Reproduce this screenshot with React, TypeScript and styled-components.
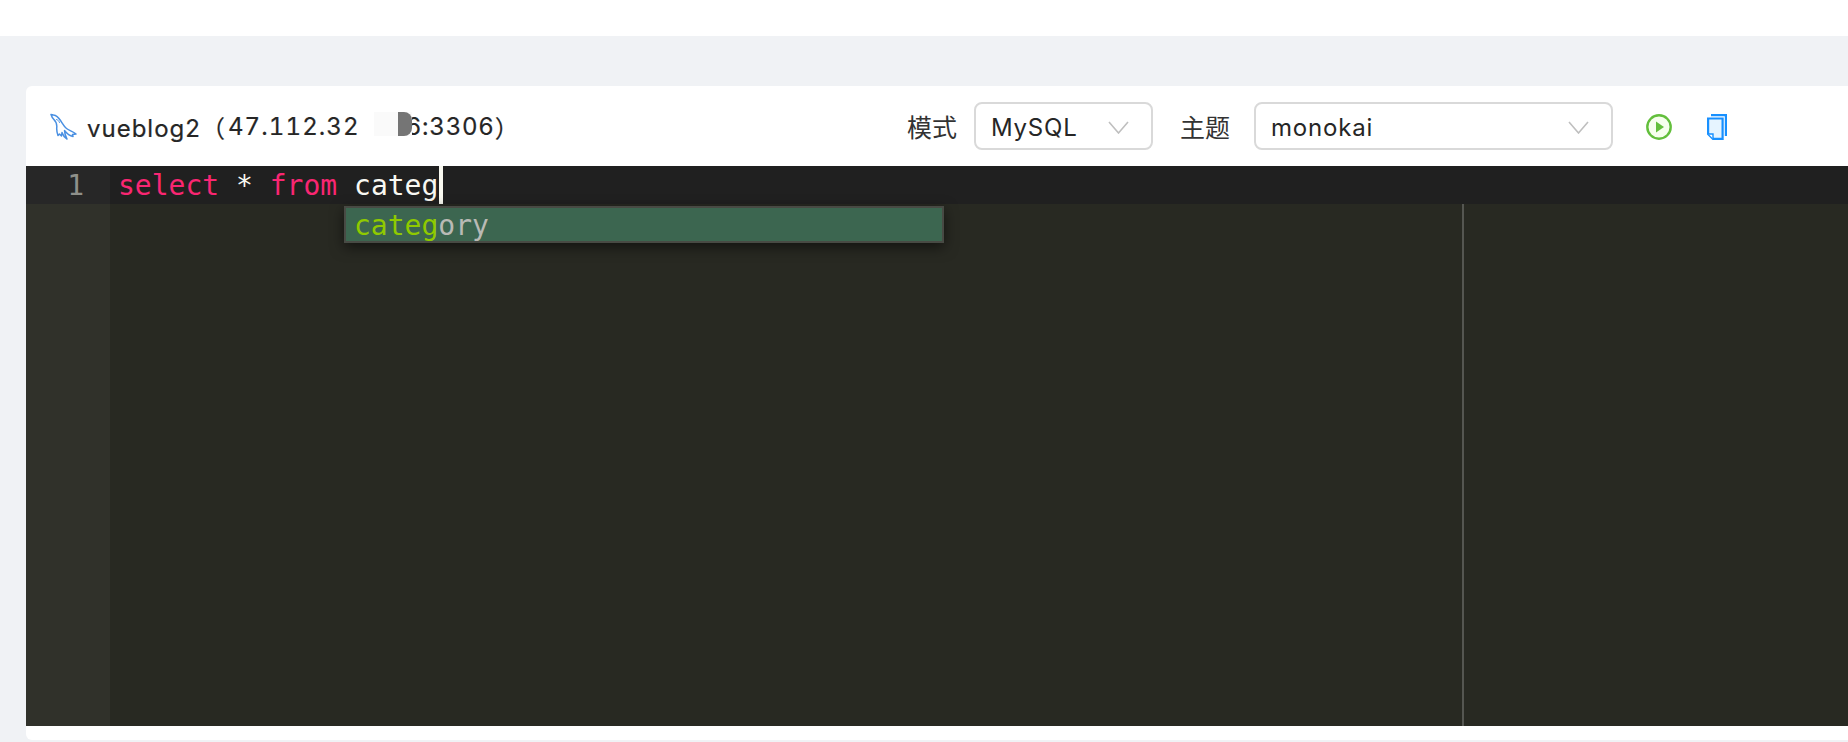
import React from "react";
import styled, { createGlobalStyle } from "styled-components";

const GlobalStyle = createGlobalStyle`
  html, body {
    margin: 0;
    padding: 0;
    background: #f0f2f5;
    overflow: hidden;
  }
`;

const Page = styled.div`
  width: 1848px;
  height: 742px;
  display: flex;
  flex-direction: column;
  font-family: Inter, "Noto Sans CJK SC", sans-serif;
`;

const TopBar = styled.div`
  height: 36px;
  background: #fff;
`;

const Content = styled.div`
  flex: 1;
  padding: 50px 0 0 26px;
`;

const Card = styled.div`
  height: 654px;
  background: #fff;
  border-radius: 6px 0 0 6px;
  overflow: hidden;
`;

const Header = styled.div`
  height: 80px;
  display: flex;
  align-items: center;
  justify-content: space-between;
  padding: 0 121px 0 24px;
`;

const Title = styled.div`
  display: flex;
  align-items: center;
  gap: 10px;
  font-size: 24px;
  font-weight: 400;
  letter-spacing: 1px;
  color: #262626;
  -webkit-text-stroke: 0.2px #262626;
`;

const TitleText = styled.span`
  white-space: pre;
  display: inline-flex;
  align-items: center;
`;

const Address = styled.span<{ $spacing: number; $indent?: number }>`
  letter-spacing: ${(p) => p.$spacing}px;
  margin-left: ${(p) => p.$indent ?? 0}px;
  font-feature-settings: "tnum";
`;

const Mask = styled.span`
  position: relative;
  z-index: 1;
  display: inline-flex;
  height: 24px;
  width: 38px;
  margin: -4px -6px 0 14px;
  background: #fafafa;
  &::after {
    content: "";
    position: absolute;
    left: 24px;
    top: 0;
    width: 14px;
    height: 24px;
    background: #757575;
    border-radius: 0 8px 8px 0;
  }
`;

const Controls = styled.div`
  display: flex;
  align-items: center;
`;

const Label = styled.span<{ $gap: number }>`
  font-size: 25px;
  color: #333;
  margin-right: ${(p) => p.$gap}px;
`;

const Select = styled.div<{ $width: number; $gap?: number }>`
  width: ${(p) => p.$width}px;
  height: 48px;
  box-sizing: border-box;
  border: 2px solid #d9d9d9;
  border-radius: 8px;
  display: flex;
  align-items: center;
  justify-content: space-between;
  padding: 2px 22px 0 15px;
  margin-right: ${(p) => p.$gap ?? 0}px;
  font-size: 24px;
  letter-spacing: 0.8px;
  color: #262626;
`;

const IconSlot = styled.span<{ $gap: number }>`
  display: flex;
  margin-left: ${(p) => p.$gap}px;
  margin-top: 2px;
`;

const Editor = styled.div`
  height: 560px;
  display: flex;
  font-family: "DejaVu Sans Mono", monospace;
  font-size: 28px;
  line-height: 38px;
`;

const Gutter = styled.div`
  width: 84px;
  background: #30312a;
`;

const GutterCell = styled.div`
  height: 38px;
  background: #272727;
  color: #8f908a;
  text-align: right;
  padding: 1px 26px 0 0;
  box-sizing: border-box;
`;

const Scroller = styled.div`
  position: relative;
  flex: 1;
  background: #282922;
`;

const ActiveLine = styled.div`
  height: 38px;
  box-sizing: border-box;
  background: #202020;
  padding: 1px 0 0 8px;
  color: #f8f8f2;
  white-space: pre;
  display: flex;
`;

const Keyword = styled.span`
  color: #f92672;
`;

const Cursor = styled.span`
  width: 4px;
  height: 38px;
  margin-top: -1px;
  background: #f8f8f0;
  margin-left: 1px;
`;

const PrintMargin = styled.div`
  position: absolute;
  left: 1352px;
  top: 38px;
  bottom: 0;
  width: 2px;
  background: #555651;
`;

const Popup = styled.div`
  position: absolute;
  left: 234px;
  top: 40px;
  width: 600px;
  height: 37px;
  box-sizing: border-box;
  background: #3c6650;
  border: 2px solid #484a44;
  box-shadow: 0 4px 14px rgba(0, 0, 0, 0.55);
  padding-left: 8px;
  line-height: 36px;
  color: #b9bab5;
  white-space: pre;
`;

const Match = styled.span`
  color: #8fca00;
`;

const DolphinIcon = () => (
  <svg width="27" height="27" viewBox="0 0 27 27" fill="none" stroke="#4a90e2" strokeWidth="1.5" strokeLinejoin="round" strokeLinecap="round">
    <path d="M1 1.5 L3.5 2 C6.5 2.5 8.5 4.5 10.5 7.5 C12.5 10.5 14 13.5 16.5 15.5 C19 17.5 23 18.5 26 21 L22.5 21.5 L23 23.5 C20 23 17.5 21.5 14.5 17.5 C14.5 20.5 15.5 23 17 26 C14.5 24.5 13 22.5 12 19.5 L11.5 23 L9.5 21 L8 22.5 C7 20 6.5 17 6.8 14 C7 11 5 7.5 3.5 6 C2 4.5 1.5 3 1 1.5 Z" />
    <path d="M6.5 6.5 C8 7 9 8 9.5 9.5" strokeWidth="1" />
  </svg>
);

const PlayIcon = () => (
  <svg width="26" height="26" viewBox="0 0 26 26">
    <circle cx="13" cy="13" r="11.7" fill="#f6ffed" stroke="#63bf3c" strokeWidth="2.4" />
    <path d="M10 7.5 L18 13 L10 18.5 Z" fill="#63bf3c" />
  </svg>
);

const CopyIcon = () => (
  <svg width="20" height="26" viewBox="0 0 20 26" fill="none" stroke="#1890ff" strokeWidth="2.2">
    <path d="M4 1.1 H18.9 V22" />
    <path d="M1.1 4.5 H15.6 V24.9 H6 L1.1 20 Z" fill="#e6f4ff" />
    <path d="M1.5 20 H6 V24.5" strokeWidth="1.4" fill="#fff" />
  </svg>
);

const Chevron = () => (
  <svg width="21" height="13" viewBox="0 0 21 13" fill="none" stroke="#bfbfbf" strokeWidth="1.6">
    <path d="M1 1 L10.5 12 L20 1" />
  </svg>
);

export default function App() {
  return (
    <Page>
      <GlobalStyle />
      <TopBar />
      <Content>
        <Card>
          <Header>
            <Title>
              <DolphinIcon />
              <TitleText>
                vueblog2（
                <Address $spacing={1.1} $indent={2}>47.112.32</Address>
                <Mask />
                <Address $spacing={0.8}>6:3306</Address>）
              </TitleText>
            </Title>
            <Controls>
              <Label $gap={17}>模式</Label>
              <Select $width={179} $gap={27}>
                MySQL
                <Chevron />
              </Select>
              <Label $gap={24}>主题</Label>
              <Select $width={359}>
                monokai
                <Chevron />
              </Select>
              <IconSlot $gap={33}>
                <PlayIcon />
              </IconSlot>
              <IconSlot $gap={35}>
                <CopyIcon />
              </IconSlot>
            </Controls>
          </Header>
          <Editor>
            <Gutter>
              <GutterCell>1</GutterCell>
            </Gutter>
            <Scroller>
              <ActiveLine>
                <Keyword>select</Keyword> * <Keyword>from</Keyword> categ
                <Cursor />
              </ActiveLine>
              <PrintMargin />
              <Popup>
                <Match>categ</Match>ory
              </Popup>
            </Scroller>
          </Editor>
        </Card>
      </Content>
    </Page>
  );
}
